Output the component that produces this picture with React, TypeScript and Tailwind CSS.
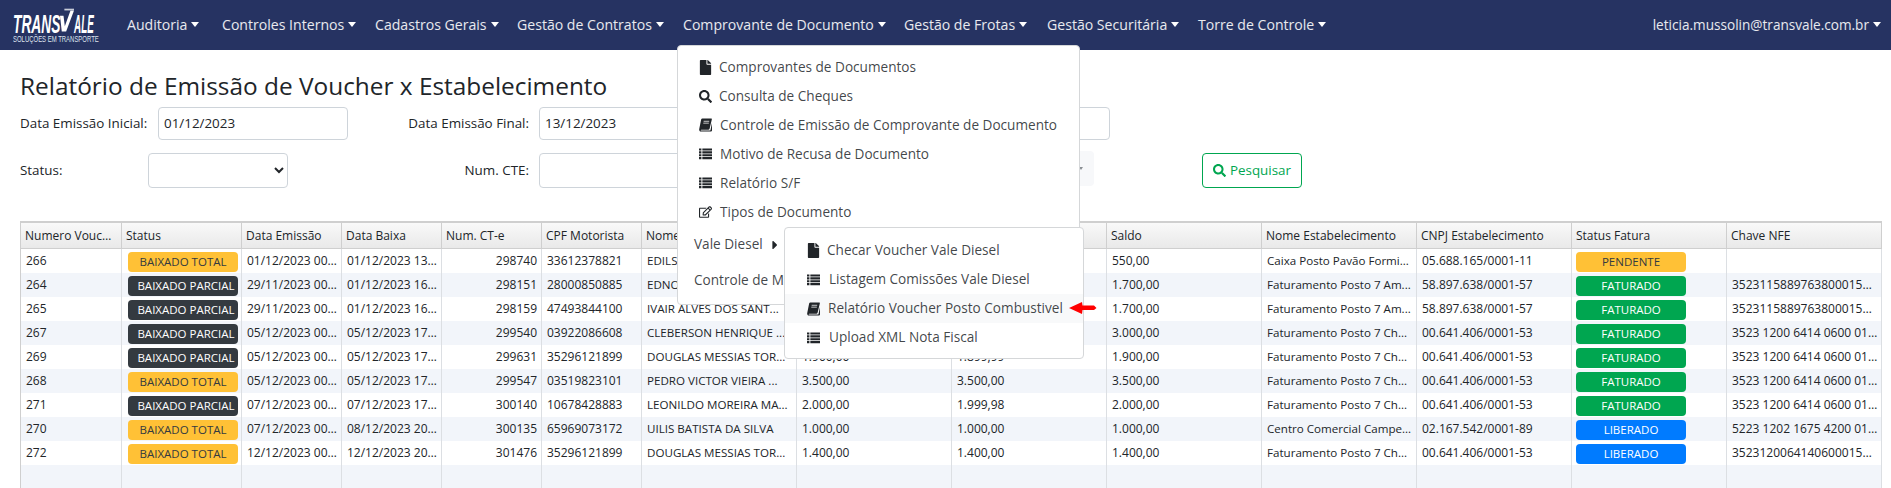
import { FaCaretRight, FaFile, FaRegEdit, FaSearch } from "react-icons/fa";

const navItems = [
  { label: "Auditoria", width: "w-[95px]" },
  { label: "Controles Internos", width: "w-[153px]" },
  { label: "Cadastros Gerais", width: "w-[142px]" },
  { label: "Gestão de Contratos", width: "w-[166px]" },
  { label: "Comprovante de Documento", width: "w-[221px]" },
  { label: "Gestão de Frotas", width: "w-[143px]" },
  { label: "Gestão Securitária", width: "w-[151px]" },
  { label: "Torre de Controle", width: "w-[150px]" },
];

const headers = [
  "Numero Voucher",
  "Status",
  "Data Emissão",
  "Data Baixa",
  "Num. CT-e",
  "CPF Motorista",
  "Nome Motorista",
  "Valor",
  "Valor Utilizado",
  "Saldo",
  "Nome Estabelecimento",
  "CNPJ Estabelecimento",
  "Status Fatura",
  "Chave NFE",
];

const rows = [
  ["266", "BAIXADO TOTAL", "01/12/2023 00:00:00", "01/12/2023 13:20:11", "298740", "33612378821", "EDILSON PEREIRA DA CO...", "550,00", "550,00", "550,00", "Caixa Posto Pavão Formi...", "05.688.165/0001-11", "PENDENTE", ""],
  ["264", "BAIXADO PARCIAL", "29/11/2023 00:00:00", "01/12/2023 16:10:42", "298151", "28000850885", "EDNO ROGERIO DE SOUZA...", "1.700,00", "1.699,99", "1.700,00", "Faturamento Posto 7 Am...", "58.897.638/0001-57", "FATURADO", "35231158897638000155550010"],
  ["265", "BAIXADO PARCIAL", "29/11/2023 00:00:00", "01/12/2023 16:12:05", "298159", "47493844100", "IVAIR ALVES DOS SANT...", "1.700,00", "1.699,99", "1.700,00", "Faturamento Posto 7 Am...", "58.897.638/0001-57", "FATURADO", "35231158897638000155550010"],
  ["267", "BAIXADO PARCIAL", "05/12/2023 00:00:00", "05/12/2023 17:02:31", "299540", "03922086608", "CLEBERSON HENRIQUE ...", "3.000,00", "2.999,99", "3.000,00", "Faturamento Posto 7 Ch...", "00.641.406/0001-53", "FATURADO", "3523 1200 6414 0600 0153 5500"],
  ["269", "BAIXADO PARCIAL", "05/12/2023 00:00:00", "05/12/2023 17:04:18", "299631", "35296121899", "DOUGLAS MESSIAS TOR...", "1.900,00", "1.899,99", "1.900,00", "Faturamento Posto 7 Ch...", "00.641.406/0001-53", "FATURADO", "3523 1200 6414 0600 0153 5500"],
  ["268", "BAIXADO TOTAL", "05/12/2023 00:00:00", "05/12/2023 17:06:50", "299547", "03519823101", "PEDRO VICTOR VIEIRA ...", "3.500,00", "3.500,00", "3.500,00", "Faturamento Posto 7 Ch...", "00.641.406/0001-53", "FATURADO", "3523 1200 6414 0600 0153 5500"],
  ["271", "BAIXADO PARCIAL", "07/12/2023 00:00:00", "07/12/2023 17:30:09", "300140", "10678428883", "LEONILDO MOREIRA MA...", "2.000,00", "1.999,98", "2.000,00", "Faturamento Posto 7 Ch...", "00.641.406/0001-53", "FATURADO", "3523 1200 6414 0600 0153 5500"],
  ["270", "BAIXADO TOTAL", "07/12/2023 00:00:00", "08/12/2023 20:41:27", "300135", "65969073172", "UILIS BATISTA DA SILVA", "1.000,00", "1.000,00", "1.000,00", "Centro Comercial Campe...", "02.167.542/0001-89", "LIBERADO", "5223 1202 1675 4200 0189 5500"],
  ["272", "BAIXADO TOTAL", "12/12/2023 00:00:00", "12/12/2023 20:15:33", "301476", "35296121899", "DOUGLAS MESSIAS TOR...", "1.400,00", "1.400,00", "1.400,00", "Faturamento Posto 7 Ch...", "00.641.406/0001-53", "LIBERADO", "35231200641406000153550010"],
];

const badgeColors: Record<string, string> = {
  "BAIXADO TOTAL": "bg-[#ffc136] text-[#343a40]",
  "BAIXADO PARCIAL": "bg-[#343a40] pl-[6px] text-white",
  PENDENTE: "bg-[#ffc136] text-[#343a40]",
  FATURADO: "bg-[#00a650] text-white",
  LIBERADO: "bg-[#007bff] text-white",
};

const gridCols =
  "grid grid-cols-[101px_120px_100px_100px_100px_100px_155px_155px_155px_155px_155px_155px_155px_155px]";

function Caret() {
  return <span className="ml-[4px] inline-block border-x-[4px] border-t-[5px] border-x-transparent border-t-white align-[3px]" />;
}

function Logo() {
  return (
    <div className="h-[50px] w-[127px] shrink-0 pt-[7px] pl-[13px] text-white">
      <div className="flex h-[27px] w-[80px] items-end font-['Liberation_Sans'] text-[26px] leading-[20px] font-bold italic">
        <span className="w-[47px] shrink-0">
          <span className="inline-block origin-left scale-x-[0.53]">TRANS</span>
        </span>
        <svg viewBox="0 0 16 27" className="h-[27px] w-[14px] shrink-0">
          <path d="M0 8h4l1.5 12L12 2h4L7 26H2z" fill="#fff" />
          <path d="M5 1h11" stroke="#c8ccd8" strokeWidth="2" />
        </svg>
        <span className="w-[19px] shrink-0">
          <span className="inline-block origin-left scale-x-[0.38]">ALE</span>
        </span>
      </div>
      <div className="mt-[1px] w-[80px] font-['Liberation_Sans'] text-[8.5px] leading-[8px] whitespace-nowrap text-[#dfe3ee]">
        <span className="inline-block origin-left scale-x-[0.7]">SOLUÇÕES EM TRANSPORTE</span>
      </div>
    </div>
  );
}

function ListIcon() {
  return (
    <svg viewBox="0 0 14 12" className="h-[12px] w-[14px]" fill="#212529">
      <path d="M0 0h2.6v2.3H0zM3.6 0H14v2.3H3.6zM0 3.1h2.6v2.3H0zM3.6 3.1H14v2.3H3.6zM0 6.2h2.6v2.3H0zM3.6 6.2H14v2.3H3.6zM0 9.3h2.6v2.3H0zM3.6 9.3H14v2.3H3.6z" />
    </svg>
  );
}

function BookIcon() {
  return (
    <svg viewBox="0 0 14 14" className="h-[14px] w-[14px]" fill="#212529">
      <path d="M3.6 0H13c.7 0 1 .5.8 1.1L11.4 11c-.2.7-.7 1-1.4 1H2.4c-.6 0-.9.9 0 .9h9.2c.4 0 .7-.2.8-.6L14 4.8v8c-.2.7-.7 1.2-1.4 1.2H2C.7 14 0 12.8.2 11.5L2.3 1.2C2.5.5 3 0 3.6 0z" />
      <path d="M5 3h6M4.6 5h6" stroke="#fff" strokeWidth="0.8" />
    </svg>
  );
}

function Badge({ text }: { text: string }) {
  return (
    <div className={`mt-[3px] flex h-[20px] w-[110px] items-center justify-center rounded-[4px] text-[11.5px] ${badgeColors[text]}`}>
      {text}
    </div>
  );
}

function MenuItem({ icon, text, gap }: { icon: React.ReactNode; text: string; gap: string }) {
  return (
    <div className="flex h-[29px] items-center whitespace-nowrap">
      <span className="flex w-[13px] shrink-0 justify-start text-[#212529]">{icon}</span>
      <span className={gap}>{text}</span>
    </div>
  );
}

function DocumentMenu() {
  return (
    <div className="absolute top-[45px] left-[677px] z-10 h-[260px] w-[403px] rounded-[4px] border border-[#d5d7d9] bg-white text-[13.6px] text-[#212529]/85">
      <div className="pt-[6.5px] pl-[21px]">
        <MenuItem icon={<FaFile size={15} />} text="Comprovantes de Documentos" gap="ml-[7px]" />
        <MenuItem icon={<FaSearch size={13} />} text="Consulta de Cheques" gap="ml-[7px]" />
        <MenuItem icon={<BookIcon />} text="Controle de Emissão de Comprovante de Documento" gap="ml-[8px]" />
        <MenuItem icon={<ListIcon />} text="Motivo de Recusa de Documento" gap="ml-[8px]" />
        <MenuItem icon={<ListIcon />} text="Relatório S/F" gap="ml-[8px]" />
        <MenuItem icon={<FaRegEdit size={14} />} text="Tipos de Documento" gap="ml-[8px]" />
      </div>
      <div className="flex h-[36px] items-center pl-[16px]">
        Vale Diesel
        <FaCaretRight size={14} className="ml-[5px] text-[#212529]" />
      </div>
      <div className="flex h-[36px] items-center pl-[16px]">Controle de Motorista</div>
    </div>
  );
}

function VoucherSubmenu() {
  return (
    <div className="absolute top-[227px] left-[784px] z-20 h-[132px] w-[300px] rounded-[4px] border border-[#d5d7d9] bg-white text-[13.6px] text-[#212529]/85">
      <div className="pt-[8px]">
        <div className="pl-[22px]">
          <MenuItem icon={<FaFile size={15} />} text="Checar Voucher Vale Diesel" gap="ml-[7px]" />
          <MenuItem icon={<ListIcon />} text="Listagem Comissões Vale Diesel" gap="ml-[9px]" />
        </div>
        <div className="bg-[#f8f9fa] pl-[22px]">
          <MenuItem icon={<BookIcon />} text="Relatório Voucher Posto Combustivel" gap="ml-[8px]" />
        </div>
        <div className="pl-[22px]">
          <MenuItem icon={<ListIcon />} text="Upload XML Nota Fiscal" gap="ml-[9px]" />
        </div>
      </div>
      <svg viewBox="0 0 28 12" className="absolute top-[74px] left-[284px] h-[12px] w-[28px]">
        <path d="M0 6 13 0l.5 3.5H25l2.5 2.5L25 8H13.5l-.5 4z" fill="#f00" />
      </svg>
    </div>
  );
}

export default function App() {
  return (
    <div className="relative h-[488px] w-[1891px] overflow-hidden bg-white font-['Open_Sans',sans-serif] text-[13.4px] text-[#212529]">
      <nav className="flex h-[50px] items-center bg-[#263362] text-[14.1px] text-white/90">
        <Logo />
        {navItems.map((item) => (
          <div key={item.label} className={`${item.width} shrink-0 whitespace-nowrap`}>
            {item.label}
            <Caret />
          </div>
        ))}
        <div className="ml-auto pr-[10px] text-[13.6px] whitespace-nowrap">
          leticia.mussolin@transvale.com.br
          <Caret />
        </div>
      </nav>

      <div className="pl-[20px]">
        <h3 className="mt-[18px] h-[39px] text-[24.4px] leading-[36px]">Relatório de Emissão de Voucher x Estabelecimento</h3>

        <div className="flex h-[33px] items-center">
          <label className="w-[138px]">Data Emissão Inicial:</label>
          <div className="flex h-[33px] w-[190px] items-center rounded-[4px] border border-[#ced4da] pl-[5px]">01/12/2023</div>
          <label className="w-[181px] text-right">Data Emissão Final:</label>
          <div className="ml-[10px] flex h-[33px] w-[571px] items-center rounded-[4px] border border-[#ced4da] pl-[5px]">13/12/2023</div>
        </div>

        <div className="mt-[13px] flex h-[35px] items-center">
          <label className="w-[128px]">Status:</label>
          <select className="h-[35px] w-[140px] rounded-[4px] border border-[#ced4da] bg-white" />
          <label className="w-[241px] text-right">Num. CTE:</label>
          <div className="ml-[10px] h-[35px] w-[200px] rounded-[4px] border border-[#ced4da]" />
          <div className="-mt-[2px] ml-[40px] flex h-[35px] w-[315px] items-center justify-end self-start rounded-[4px] bg-[#f7f8fa] pr-[11px]">
            <span className="inline-block border-x-[2px] border-t-[3px] border-x-transparent border-t-[#8a8f94]" />
          </div>
          <button className="ml-[108px] flex h-[35px] w-[100px] items-center justify-center gap-[4px] rounded-[4px] border border-[#00a650] text-[#00a650]">
            <FaSearch size={13} />
            Pesquisar
          </button>
        </div>

        <div className="mt-[33px] w-[1862px] border-t-2 border-l border-[#cfcfcf] text-[12px]">
          <div className={`${gridCols} h-[26px] border-b border-[#cfcfcf] bg-gradient-to-b from-[#f9f9f9] to-[#e9e9e9]`}>
            {headers.map((header) => (
              <div key={header} className="truncate border-r border-[#cfcfcf] px-[4px] leading-[25px]">
                {header}
              </div>
            ))}
          </div>
          {rows.map((row, rowIndex) => (
            <div key={row[0]} className={`${gridCols} h-[24px] ${rowIndex % 2 === 0 ? "bg-white" : "bg-[#f2f5fa]"}`}>
              {row.map((cell, cellIndex) => (
                <div
                  key={cellIndex}
                  className={`truncate border-r border-[#dcdfe3] leading-[24px] ${cellIndex === 4 ? "pr-[4px] text-right" : "pr-[3px] pl-[5px]"} ${cellIndex === 6 || cellIndex === 10 ? "text-[11.6px]" : ""}`}
                >
                  {cellIndex === 1 || cellIndex === 12 ? (
                    <div className={cellIndex === 12 ? "-ml-[1px]" : "ml-[1px]"}>
                      <Badge text={cell} />
                    </div>
                  ) : (
                    cell
                  )}
                </div>
              ))}
            </div>
          ))}
          <div className={`${gridCols} h-[24px] bg-[#f2f5fa]`}>
            {headers.map((header) => (
              <div key={header} className="border-r border-[#dcdfe3]" />
            ))}
          </div>
        </div>
      </div>

      <DocumentMenu />
      <VoucherSubmenu />
    </div>
  );
}
